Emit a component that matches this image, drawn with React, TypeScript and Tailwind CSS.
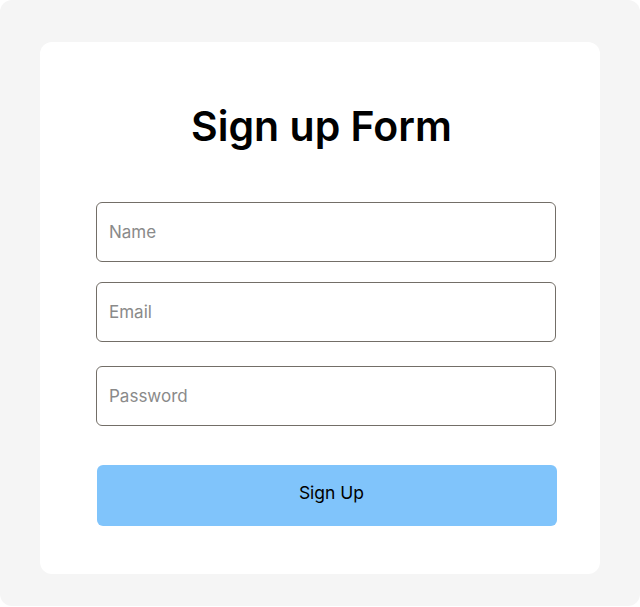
const inputClass =
  "h-[60px] w-[460px] rounded-md border border-[#736e67] px-3 text-[17px] placeholder:text-[#8a8a8a] outline-none";

export default function App() {
  return (
    <div className="bg-white w-[640px] h-[607px] font-['Inter',sans-serif]">
      <div className="bg-[#f5f5f5] h-[606px] rounded-xl px-10 pt-[42px]">
        <div className="bg-white rounded-xl h-[532px] pl-14 pt-[60px]">
          <h1 className="pl-[3px] pr-14 text-center text-[41px] leading-[48px] font-semibold text-black">
            Sign up Form
          </h1>
          <form className="mt-[52px] flex flex-col">
            <input type="text" placeholder="Name" className={inputClass} />
            <input type="email" placeholder="Email" className={`mt-[20px] ${inputClass}`} />
            <input type="password" placeholder="Password" className={`mt-[24px] ${inputClass}`} />
            <button
              type="button"
              className="mt-[39px] ml-px h-[61px] w-[460px] rounded-md bg-[#80c4fb] pl-[9px] pb-[4px] text-[17.5px] font-normal text-black"
            >
              Sign Up
            </button>
          </form>
        </div>
      </div>
    </div>
  );
}
